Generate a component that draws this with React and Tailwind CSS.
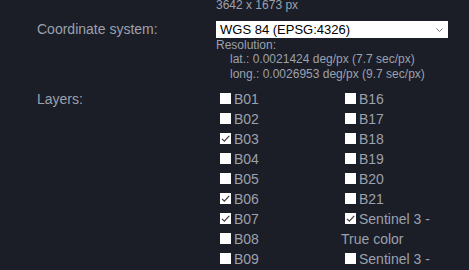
import React from "react";

const col1 = [
  ["B01", false],
  ["B02", false],
  ["B03", true],
  ["B04", false],
  ["B05", false],
  ["B06", true],
  ["B07", true],
  ["B08", false],
  ["B09", false],
  ["B10", false],
  ["B11", false],
];

const col2 = [
  ["B16", false],
  ["B17", false],
  ["B18", false],
  ["B19", false],
  ["B20", false],
  ["B21", false],
  ["Sentinel 3 - True color", true],
  ["Sentinel 3 - False color", false],
];

function Check({ checked }) {
  return (
    <svg
      width="11"
      height="11"
      viewBox="0 0 11 11"
      className="inline-block align-baseline ml-[4px] mr-[3px]"
    >
      <rect width="11" height="11" fill="#ffffff" />
      {checked && (
        <path d="M2 5.8 L4.4 8.2 L9.2 2.8" fill="none" stroke="#3a3a3a" strokeWidth="1.2" />
      )}
    </svg>
  );
}

function Layer({ name, checked }) {
  return (
    <div className="text-[14px] leading-[20px]">
      <Check checked={checked} />
      {name}
    </div>
  );
}

export default function App() {
  return (
    <div className="h-[270px] w-[469px] overflow-hidden bg-[#1b1d27] text-[#9ca1ae] font-['Liberation_Sans',Arial,sans-serif]">
      <div className="-mt-[2px] flex">
        <div className="w-[216px]" />
        <div className="text-[12px] leading-[14px]">3642 x 1673 px</div>
      </div>

      <div className="mt-[9px] flex">
        <div className="w-[216px] pl-[37px] text-[14px] leading-[17px]">Coordinate system:</div>
        <div>
          <div className="w-[232px] h-[17px] bg-white text-black text-[13px] leading-[17px] pl-[4px] pr-[5px] flex items-center justify-between">
            <span>WGS 84 (EPSG:4326)</span>
            <svg width="7" height="4" viewBox="0 0 7 4">
              <path d="M0.5 0.5 L3.5 3.5 L6.5 0.5" fill="none" stroke="#777" strokeWidth="1" />
            </svg>
          </div>
          <div className="text-[12px] leading-[14px]">Resolution:</div>
          <div className="pl-[14px] text-[12px] leading-[15px]">
            <div>lat.: 0.0021424 deg/px (7.7 sec/px)</div>
            <div>long.: 0.0026953 deg/px (9.7 sec/px)</div>
          </div>
        </div>
      </div>

      <div className="mt-[7px] flex">
        <div className="w-[216px] pl-[37px] text-[14px] leading-[20px]">Layers:</div>
        <div className="flex">
          <div className="w-[125px]">
            {col1.map(([n, c]) => (
              <Layer key={n} name={n} checked={c} />
            ))}
          </div>
          <div className="w-[110px]">
            {col2.map(([n, c]) => (
              <Layer key={n} name={n} checked={c} />
            ))}
          </div>
        </div>
      </div>
    </div>
  );
}
